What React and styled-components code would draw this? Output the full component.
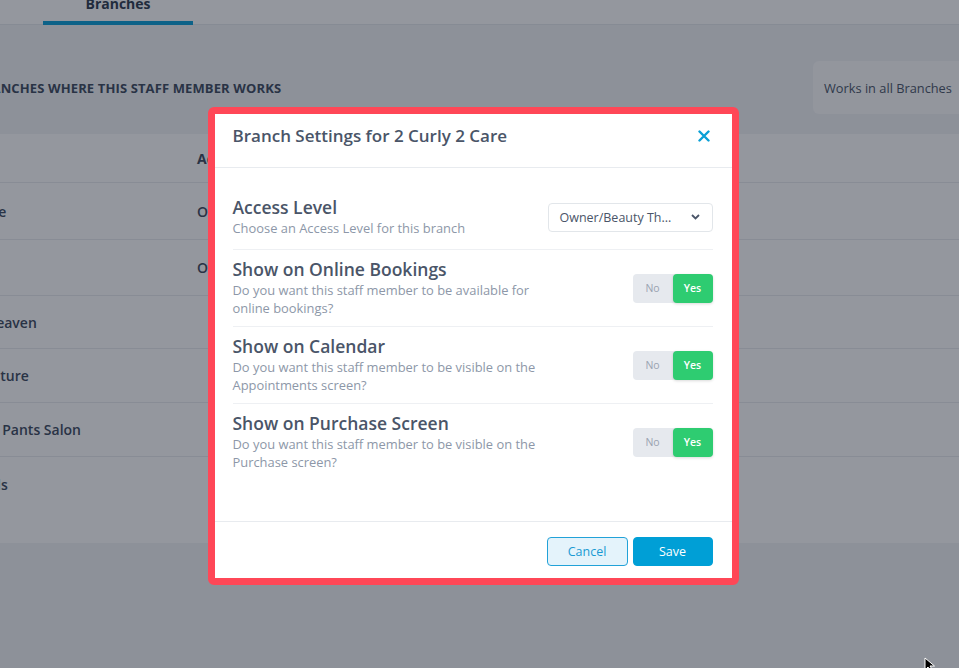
import React from "react";
import styled, { createGlobalStyle } from "styled-components";

const GlobalStyle = createGlobalStyle`
  html, body {
    margin: 0;
    padding: 0;
    background: #f2f4f6;
    font-family: "Open Sans", "Noto Sans", sans-serif;
    color: #4a5568;
  }
  * { box-sizing: border-box; }
`;

const Page = styled.div`
  position: relative;
  width: 959px;
  height: 668px;
  overflow: hidden;
  background: #f2f4f6;
`;

// top tab bar (behind the overlay)
const TopBar = styled.div`
  display: flex;
  height: 25px;
  background: #ffffff;
  border-bottom: 1px solid #e6e9ed;
  padding-left: 43px;
`;

const Tab = styled.div`
  width: 150px;
  margin-top: -7px;
  height: 32px;
  text-align: center;
  font-size: 14px;
  font-weight: 700;
  color: #2f3b4f;
  line-height: 22px;
  border-bottom: ${({ active }) => (active ? "4px solid #0a9fd8" : "none")};
`;

const Content = styled.div`
  margin: 0 -20px 0 -26px;
`;

const SectionHead = styled.div`
  display: flex;
  align-items: center;
  justify-content: space-between;
  height: 53px;
  margin: 36px 0 20px;
`;

const SectionTitle = styled.h3`
  margin: 0;
  font-size: 13px;
  font-weight: 700;
  letter-spacing: 0.12px;
  text-transform: uppercase;
  color: #3d4a5e;
`;

const AllButton = styled.div`
  display: flex;
  align-items: center;
  width: 166px;
  height: 53px;
  padding-left: 11px;
  background: #fdfdfe;
  border-radius: 6px;
  font-size: 12.8px;
  color: #4a5568;
`;

const TableCard = styled.div`
  background: #ffffff;
  padding-bottom: 32px;
`;

const Row = styled.div`
  display: grid;
  grid-template-columns: 223px 1fr;
  align-items: center;
  height: ${({ h }) => h}px;
  border-bottom: ${({ last }) => (last ? "none" : "1px solid #e9ecef")};
  font-size: 14px;
  font-weight: ${({ head }) => (head ? 700 : 600)};
  color: #3d4a5e;
  white-space: nowrap;
`;

// modal
const Overlay = styled.div`
  position: absolute;
  inset: 0;
  background: rgba(17, 24, 39, 0.45);
  display: flex;
  justify-content: center;
  align-items: flex-start;
  padding: 107px 13px 0 0;
`;

const Frame = styled.div`
  border: 7px solid #ff4757;
  border-radius: 6px;
  background: #ff4757;
`;

const Modal = styled.div`
  width: 517px;
  height: 464px;
  background: #ffffff;
  display: flex;
  flex-direction: column;
`;

const ModalHeader = styled.div`
  display: flex;
  align-items: center;
  justify-content: space-between;
  height: 54px;
  padding: 0 22px 10px 18px;
  border-bottom: 1px solid #e8ebef;
`;

const ModalTitle = styled.h2`
  margin: 0;
  font-size: 17px;
  font-weight: 600;
  color: #4a5568;
`;

const CloseBtn = styled.button`
  display: flex;
  padding: 0;
  border: none;
  background: none;
  cursor: pointer;
`;

const ModalBody = styled.div`
  flex: 1;
  padding: 20px 19px 0 18px;
`;

const SettingRow = styled.div`
  display: flex;
  align-items: center;
  justify-content: space-between;
  padding: 9px 0 ${({ first }) => (first ? 12 : 9)}px;
  border-bottom: ${({ last }) => (last ? "none" : "1px solid #eef0f3")};
`;

const SettingText = styled.div`
  display: flex;
  flex-direction: column;
  gap: 1px;
  max-width: 320px;
`;

const SettingTitle = styled.div`
  font-size: 17.5px;
  font-weight: 600;
  line-height: 21px;
  color: #4a5568;
`;

const SettingSub = styled.div`
  font-size: 12.9px;
  line-height: 18px;
  color: #8d97a8;
`;

const Select = styled.div`
  display: flex;
  align-items: center;
  justify-content: space-between;
  width: 165px;
  height: 29px;
  padding: 0 12px 0 11px;
  border: 1px solid #e2e6ea;
  border-radius: 4px;
  font-size: 12.5px;
  color: #4a5568;
`;

const Toggle = styled.div`
  display: flex;
  width: 80px;
  height: 29px;
  border-radius: 4px;
  background: #e6e9ee;
`;

const ToggleOpt = styled.div`
  flex: 1;
  display: flex;
  align-items: center;
  justify-content: center;
  border-radius: 4px;
  font-size: 10.5px;
  font-weight: ${({ on }) => (on ? 600 : 400)};
  color: ${({ on }) => (on ? "#ffffff" : "#9aa3b1")};
  background: ${({ on }) => (on ? "#2ecc71" : "transparent")};
  box-shadow: ${({ on }) => (on ? "0 1px 3px rgba(0,0,0,0.15)" : "none")};
`;

const ModalFooter = styled.div`
  display: flex;
  justify-content: flex-end;
  gap: 5px;
  height: 57px;
  padding: 15px 19px 0 0;
  border-top: 1px solid #e8ebef;
`;

const Button = styled.button`
  width: ${({ primary }) => (primary ? 80 : 81)}px;
  height: 29px;
  border-radius: 4px;
  font-family: inherit;
  font-size: 12.5px;
  border: 1px solid ${({ primary }) => (primary ? "#009fd6" : "#22a2d8")};
  background: ${({ primary }) => (primary ? "#009fd6" : "#e4f3fb")};
  color: ${({ primary }) => (primary ? "#ffffff" : "#1a9ad3")};
  cursor: pointer;
`;

const Cursor = styled.svg`
  position: absolute;
  left: 924px;
  top: 657px;
`;

const branches = [
  { name: "Rose", access: "Owner/Beauty Therapist", h: 57 },
  { name: "Ivy", access: "Owner/Beauty Therapist", h: 56 },
  { name: "7 Heaven", access: "", h: 53 },
  { name: "Couture", access: "", h: 54 },
  { name: "Hot Pants Salon", access: "", h: 54 },
  { name: "Nails", access: "", h: 54 },
];

const settings = [
  {
    title: "Show on Online Bookings",
    sub: "Do you want this staff member to be available for online bookings?",
  },
  {
    title: "Show on Calendar",
    sub: "Do you want this staff member to be visible on the Appointments screen?",
  },
  {
    title: "Show on Purchase Screen",
    sub: "Do you want this staff member to be visible on the Purchase screen?",
  },
];

const YesNo = ({ value }) => (
  <Toggle>
    <ToggleOpt on={!value}>No</ToggleOpt>
    <ToggleOpt on={value}>Yes</ToggleOpt>
  </Toggle>
);

const App = () => {
  return (
    <>
      <GlobalStyle />
      <Page>
        <TopBar>
          <Tab active>Branches</Tab>
        </TopBar>
        <Content>
          <SectionHead>
            <SectionTitle>Branches where this staff member works</SectionTitle>
            <AllButton>Works in all Branches</AllButton>
          </SectionHead>
          <TableCard>
            <Row head h={49}>
              <span></span>
              <span>Access Level</span>
            </Row>
            {branches.map((b, i) => (
              <Row key={b.name} h={b.h} last={i === branches.length - 1}>
                <span>{b.name}</span>
                <span>{b.access}</span>
              </Row>
            ))}
          </TableCard>
        </Content>

        <Overlay>
          <Frame>
            <Modal>
              <ModalHeader>
                <ModalTitle>Branch Settings for 2 Curly 2 Care</ModalTitle>
                <CloseBtn>
                  <svg width="12" height="12" viewBox="0 0 12 12">
                    <path d="M1.5 1.5 L10.5 10.5 M10.5 1.5 L1.5 10.5" stroke="#0aa0d6" strokeWidth="2.4" strokeLinecap="round" />
                  </svg>
                </CloseBtn>
              </ModalHeader>
              <ModalBody>
                <SettingRow first>
                  <SettingText>
                    <SettingTitle>Access Level</SettingTitle>
                    <SettingSub>Choose an Access Level for this branch</SettingSub>
                  </SettingText>
                  <Select>
                    <span>Owner/Beauty Th...</span>
                    <svg width="9" height="6" viewBox="0 0 9 6">
                      <path d="M1 1 L4.5 4.5 L8 1" fill="none" stroke="#4a5568" strokeWidth="1.8" />
                    </svg>
                  </Select>
                </SettingRow>
                {settings.map((s, i) => (
                  <SettingRow key={s.title} last={i === settings.length - 1}>
                    <SettingText>
                      <SettingTitle>{s.title}</SettingTitle>
                      <SettingSub>{s.sub}</SettingSub>
                    </SettingText>
                    <YesNo value={true} />
                  </SettingRow>
                ))}
              </ModalBody>
              <ModalFooter>
                <Button>Cancel</Button>
                <Button primary>Save</Button>
              </ModalFooter>
            </Modal>
          </Frame>
        </Overlay>

        <Cursor width="14" height="14" viewBox="0 0 14 14">
          <path d="M1 1 L1 13 L4 10 L6.5 14 L8.5 13 L6 9 L10.5 9 Z" fill="#000" stroke="#fff" strokeWidth="1" />
        </Cursor>
      </Page>
    </>
  );
};

export default App;
